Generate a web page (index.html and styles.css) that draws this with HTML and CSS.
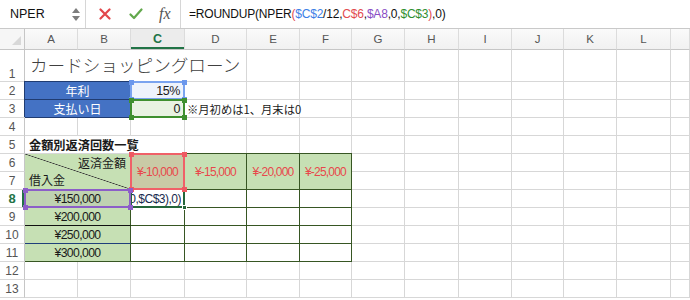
FILE: index.html
```html
<!DOCTYPE html>
<html lang="ja">
<head>
<meta charset="utf-8">
<title>カードショッピングローン</title>
<link rel="stylesheet" href="styles.css">
</head>
<body>
<div class="fbar">
  <div class="namebox">
    <span class="nb-text">NPER</span>
    <span class="spin"><i class="up"></i><i class="dn"></i></span>
  </div>
  <div class="fbtns">
    <svg class="ico" width="12" height="12" viewBox="0 0 12 12"><path d="M1.5 1.5L10.5 10.5M10.5 1.5L1.5 10.5" stroke="#e2474b" stroke-width="2.2" stroke-linecap="round" fill="none"/></svg>
    <svg class="ico" width="14" height="12" viewBox="0 0 14 12"><path d="M1.5 6.5L5 10L12.5 1.5" stroke="#62a84c" stroke-width="2.2" stroke-linecap="round" stroke-linejoin="round" fill="none"/></svg>
    <span class="fx">fx</span>
  </div>
  <div class="formula">=ROUNDUP(NPER<span class="fr">(</span><span class="fb">$C$2</span>/12,<span class="fr">C$6</span>,<span class="fp">$A8</span>,0,<span class="fg">$C$3</span><span class="fr">)</span>,0)</div>
</div>

<div class="sheet">
  <div class="corner"><i class="tri"></i></div>
  <div class="ch">A</div><div class="ch">B</div><div class="ch cur">C</div><div class="ch">D</div><div class="ch">E</div><div class="ch">F</div><div class="ch">G</div><div class="ch">H</div><div class="ch">I</div><div class="ch">J</div><div class="ch">K</div><div class="ch">L</div><div class="ch"></div>

  <div class="rh rh1">1</div>
  <div class="cell title s4">カードショッピングローン</div>
  <span></span><span></span><span></span><span></span><span></span><span></span><span></span><span></span><span></span>

  <div class="rh">2</div>
  <div class="cell blue s2">年利</div>
  <div class="cell num rate">15%<span class="hl hl-blue"><i class="k tl"></i><i class="k tr"></i><i class="k bl"></i><i class="k br"></i></span></div>
  <span></span><span></span><span></span><span></span><span></span><span></span><span></span><span></span><span></span><span></span>

  <div class="rh">3</div>
  <div class="cell blue s2">支払い日</div>
  <div class="cell num day">0<span class="hl hl-green"><i class="k tl"></i><i class="k tr"></i><i class="k bl"></i><i class="k br"></i></span></div>
  <div class="cell note s2">※月初めは1、月末は0</div>
  <span></span><span></span><span></span><span></span><span></span><span></span><span></span><span></span>

  <div class="rh">4</div>
  <span></span><span></span><span></span><span></span><span></span><span></span><span></span><span></span><span></span><span></span><span></span><span></span><span></span>

  <div class="rh">5</div>
  <div class="cell sub s3">金額別返済回数一覧</div>
  <span class="tb"></span><span class="tb"></span><span class="tb"></span>
  <span></span><span></span><span></span><span></span><span></span><span></span><span></span>

  <div class="rh">6</div>
  <div class="cell diag s2 r2"><span class="d-top">返済金額</span><span class="d-bot">借入金</span></div>
  <div class="cell pay r2 pay-sel">¥-10,000<span class="hl hl-red"><i class="k tl"></i><i class="k tr"></i><i class="k bl"></i><i class="k br"></i></span></div>
  <div class="cell pay r2">¥-15,000</div>
  <div class="cell pay r2">¥-20,000</div>
  <div class="cell pay r2">¥-25,000</div>
  <span></span><span></span><span></span><span></span><span></span><span></span><span></span>

  <div class="rh">7</div>
  <span></span><span></span><span></span><span></span><span></span><span></span><span></span>

  <div class="rh rh-cur">8</div>
  <div class="cell amt s2 amt-sel">¥150,000<span class="hl hl-purple"><i class="k tl"></i><i class="k tr"></i><i class="k bl"></i><i class="k br"></i></span></div>
  <div class="cell edit"><span class="edit-clip"><span class="edit-text">0,$C$3),0)</span></span><span class="active"><i class="handle"></i></span></div>
  <span class="t"></span><span class="t"></span><span class="t"></span>
  <span></span><span></span><span></span><span></span><span></span><span></span><span></span>

  <div class="rh">9</div>
  <div class="cell amt s2 line-black">¥200,000</div>
  <span class="t"></span><span class="t"></span><span class="t"></span><span class="t"></span>
  <span></span><span></span><span></span><span></span><span></span><span></span><span></span>

  <div class="rh">10</div>
  <div class="cell amt s2 line-navy">¥250,000</div>
  <span class="t"></span><span class="t"></span><span class="t"></span><span class="t"></span>
  <span></span><span></span><span></span><span></span><span></span><span></span><span></span>

  <div class="rh">11</div>
  <div class="cell amt s2 line-green">¥300,000</div>
  <span class="t"></span><span class="t"></span><span class="t"></span><span class="t"></span>
  <span></span><span></span><span></span><span></span><span></span><span></span><span></span>

  <div class="rh">12</div>
  <span></span><span></span><span></span><span></span><span></span><span></span><span></span><span></span><span></span><span></span><span></span><span></span><span></span>

  <div class="rh">13</div>
  <span></span><span></span><span></span><span></span><span></span><span></span><span></span><span></span><span></span><span></span><span></span><span></span><span></span>
</div>
</body>
</html>
```

FILE: styles.css
```css
* { box-sizing: border-box; margin: 0; padding: 0; }
html, body { width: 690px; height: 300px; overflow: hidden; background: #fff; }
body { font-family: "Liberation Sans", Arial, sans-serif; color: #111; }

/* ---------- formula bar ---------- */
.fbar {
  height: 29px;
  display: flex;
  align-items: stretch;
  border-bottom: 1px solid #c9c9c9;
  background: #fff;
}
.namebox {
  width: 86px;
  display: flex;
  align-items: center;
  justify-content: space-between;
  padding: 0 5px 0 10px;
  border-right: 1px solid #d6d6d6;
}
.nb-text { font-size: 12.5px; color: #111; }
.spin { display: flex; flex-direction: column; gap: 3px; }
.spin i { display: block; width: 0; height: 0; border-left: 4px solid transparent; border-right: 4px solid transparent; }
.spin .up { border-bottom: 5px solid #7d7d7d; }
.spin .dn { border-top: 5px solid #7d7d7d; }
.fbtns {
  width: 95px;
  display: flex;
  align-items: center;
  gap: 18px;
  padding-left: 13px;
  border-right: 1px solid #d6d6d6;
}
.ico { display: block; flex: none; }
.fx {
  font-family: "Liberation Serif", "Times New Roman", serif;
  font-style: italic;
  font-size: 16px;
  color: #555;
  margin-left: -2px;
}
.formula {
  display: flex;
  align-items: center;
  padding-left: 8px;
  font-size: 12px;
  letter-spacing: -0.2px;
  color: #111;
  white-space: nowrap;
}
.fr { color: #e24b4f; }
.fb { color: #3d7fe6; }
.fp { color: #8a4ec4; }
.fg { color: #2f8f2f; }

/* ---------- sheet ---------- */
.sheet {
  display: grid;
  grid-template-columns: 25px 53px 53px 54px 62px 53px 52px 53px 54px 53px 52px 53px 54px 1fr;
  grid-template-rows: 21px 32px repeat(12, 18px);
  font-family: "Noto Sans CJK JP", "Liberation Sans", sans-serif;
  font-size: 12px;
}
.sheet > * {
  border-right: 1px solid #d7d7d7;
  border-bottom: 1px solid #d7d7d7;
  min-width: 0;
  position: relative;
}

.corner {
  background: #f6f6f6;
  border-bottom-color: #c6c6c6 !important;
  border-right-color: #c6c6c6 !important;
}
.tri {
  position: absolute;
  right: 3px;
  bottom: 4px;
  width: 0; height: 0;
  border-left: 9px solid transparent;
  border-bottom: 9px solid #d8d8d8;
}
.ch {
  background: linear-gradient(#fafafa, #f1f1f1);
  border-bottom-color: #c6c6c6 !important;
  border-right-color: #dcdcdc !important;
  display: flex;
  align-items: center;
  justify-content: center;
  font-family: "Liberation Sans", Arial, sans-serif;
  font-size: 11.5px;
  color: #555;
}
.ch.cur {
  color: #217346;
  font-weight: bold;
  font-size: 12.5px;
  background: #ececec;
  box-shadow: inset 0 -2px 0 #217346;
}
.rh {
  background: #fff;
  border-right-color: #c6c6c6 !important;
  display: flex;
  align-items: center;
  justify-content: center;
  font-family: "Liberation Sans", Arial, sans-serif;
  font-size: 12px;
  color: #555;
}
.rh1 { align-items: flex-end; }
.rh-cur {
  color: #217346;
  font-weight: bold;
  font-size: 13px;
  box-shadow: inset -2px 0 0 #217346;
}

.s2 { grid-column: span 2; }
.s3 { grid-column: span 3; }
.s4 { grid-column: span 4; }
.r2 { grid-row: span 2; }

.cell {
  display: flex;
  align-items: center;
  white-space: nowrap;
  padding: 0 3px;
  color: #1a1a1a;
}
.title {
  font-size: 17.6px;
  font-weight: 300;
  color: #404040;
  padding: 0 0 3px 5px;
}
.blue {
  background: #4472c4;
  color: #fff;
  justify-content: center;
  border-right-color: #203c72 !important;
  border-bottom-color: #203c72 !important;
  box-shadow: -1px -1px 0 #203c72;
}
.num {
  justify-content: flex-end;
  padding-right: 4px;
  font-family: "Liberation Sans", Arial, sans-serif;
  font-size: 12.5px;
  letter-spacing: -0.4px;
}
.rate { background: #eef3fc; }
.day { background: #e8f2e2; }
.note { font-size: 11.3px; padding-left: 2px; }
.sub { font-weight: bold; font-size: 12.2px; padding-left: 4px; }

.tb { border-bottom-color: #375623 !important; }
.t {
  border-right-color: #375623 !important;
  border-bottom-color: #375623 !important;
}

.diag {
  background: linear-gradient(to top right, #c6e0b4 calc(50% - 0.7px), #3c3c3c 50%, #c6e0b4 calc(50% + 0.7px));
  flex-direction: column;
  align-items: stretch;
  justify-content: space-between;
  padding: 1px 4px;
  border-right-color: #375623 !important;
  border-bottom-color: #375623 !important;
}
.d-top { align-self: flex-end; line-height: 16px; }
.d-bot { align-self: flex-start; line-height: 16px; }

.pay {
  background: #c6e0b4;
  color: #e8474b;
  justify-content: center;
  font-family: "Liberation Sans", Arial, sans-serif;
  font-size: 12px;
  letter-spacing: -0.8px;
  border-right-color: #375623 !important;
  border-bottom-color: #375623 !important;
  box-shadow: 0 -1px 0 #375623;
}
.pay-sel { background: #c9caa6; }

.amt {
  background: #c6e0b4;
  justify-content: center;
  font-family: "Liberation Sans", Arial, sans-serif;
  font-size: 12.2px;
  letter-spacing: -0.6px;
  border-right-color: #375623 !important;
}
.amt-sel { background: #bfd2b1; }
.line-black { border-bottom-color: #111 !important; }
.line-navy { border-bottom-color: #1f3f7a !important; }
.line-green { border-bottom-color: #375623 !important; }

.edit {
  padding: 0 3px 0 1px;
  border-right-color: #375623 !important;
  border-bottom-color: #375623 !important;
}
.edit-clip {
  display: flex;
  justify-content: flex-end;
  width: 100%;
  overflow: hidden;
}
.edit-text {
  flex: none;
  font-family: "Liberation Sans", Arial, sans-serif;
  font-size: 12px;
  letter-spacing: -0.5px;
  color: #172a4e;
}

/* ---------- reference highlights ---------- */
.hl {
  position: absolute;
  top: -1px; left: -1px; right: -1px; bottom: -1px;
  border: 2px solid;
  z-index: 2;
  pointer-events: none;
}
.hl-blue { border-color: #7aa3ef; }
.hl-green { border-color: #3e8f2f; }
.hl-red { border-color: #f06068; }
.hl-purple { border-color: #8c5ec8; }
.k {
  position: absolute;
  width: 5px;
  height: 5px;
}
.hl-blue .k { background: #6b97ec; }
.hl-green .k { background: #3e8f2f; }
.hl-red .k { background: #ee5a62; }
.hl-purple .k { background: #8c5ec8; }
.k.tl { top: -3.5px; left: -3.5px; }
.k.tr { top: -3.5px; right: -3.5px; }
.k.bl { bottom: -3.5px; left: -3.5px; }
.k.br { bottom: -3.5px; right: -3.5px; }

.active {
  position: absolute;
  top: -2px; left: -1px; right: -1px; bottom: -1px;
  border: 2px solid #24663a;
  z-index: 1;
}
.handle {
  position: absolute;
  right: -4px;
  bottom: -4px;
  width: 5px;
  height: 5px;
  background: #24663a;
  border: 1px solid #fff;
}
```
